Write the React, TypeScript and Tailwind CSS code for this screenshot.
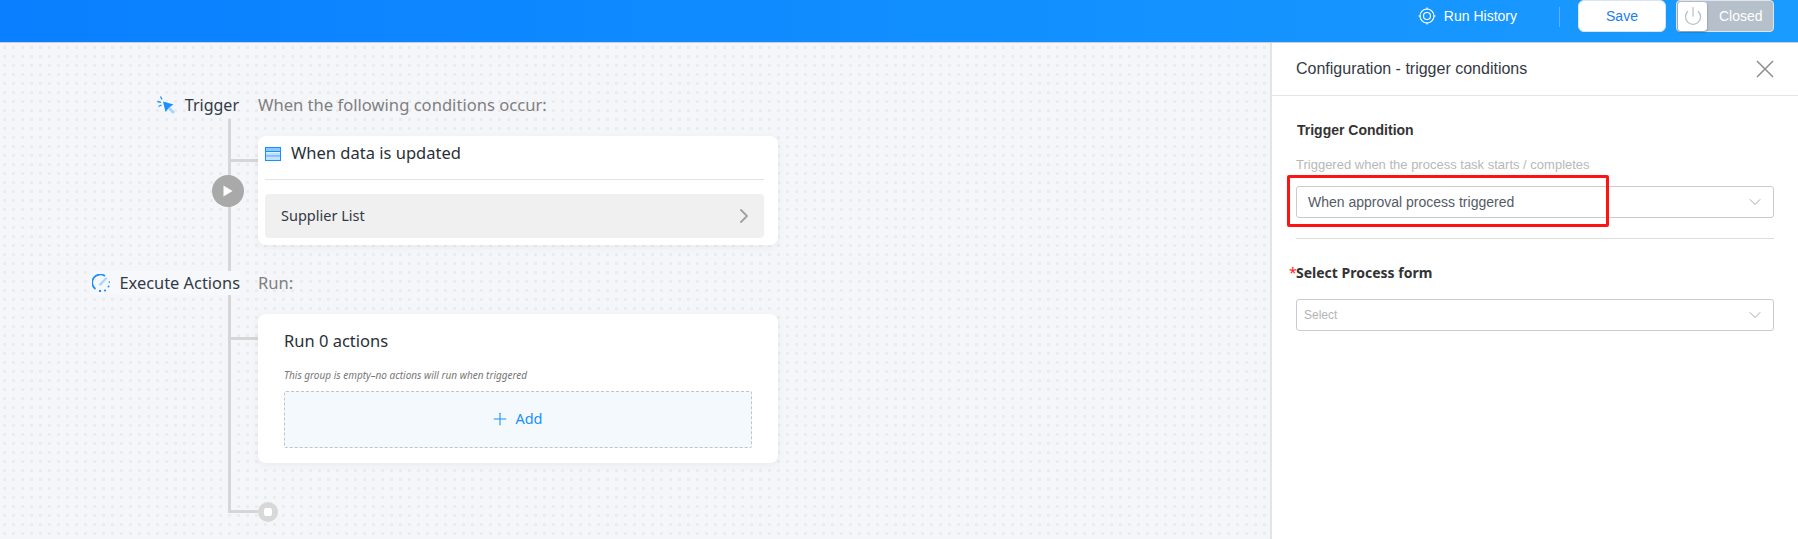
import { ChevronRight, ChevronDown, Plus, Power } from 'lucide-react';

function TriggerIcon() {
  return (
    <svg width="18" height="18" viewBox="0 0 18 18" className="shrink-0">
      <path d="M11 11l6 6" stroke="#a9d5ff" strokeWidth="3" />
      <path d="M6 5.500L16.500 8.500 12 11.500 8.500 16z" fill="#1890ff" />
      <path d="M3.500 0.500L5 3.500M0.500 5.500L4 6.300M1.500 10.500L4.500 9" stroke="#1890ff" strokeWidth="1.300" />
    </svg>
  );
}

function ExecuteIcon() {
  return (
    <svg width="18" height="18" viewBox="0 0 18 18" className="shrink-0">
      <path d="M3.500 15A8 8 0 0 1 13 2" fill="none" stroke="#1890ff" strokeWidth="1.700" />
      <path d="M6.500 10.500L14 3l1.500 1.500L8.500 12z" fill="#a9d5ff" />
      <circle cx="8" cy="17" r="1.200" fill="#1890ff" />
      <circle cx="13" cy="16.500" r="1.100" fill="#1890ff" />
      <circle cx="16.500" cy="12.500" r="1" fill="#1890ff" />
      <circle cx="17.300" cy="8" r="0.800" fill="#1890ff" />
    </svg>
  );
}

function TableIcon() {
  return (
    <svg width="16" height="14" viewBox="0 0 16 14" className="shrink-0">
      <rect x="0.500" y="0.500" width="15" height="13" fill="#fff" stroke="#1890ff" />
      <rect x="1" y="1" width="14" height="3" fill="#8cc8ff" />
      <rect x="1" y="5.500" width="14" height="3" fill="#bfe0ff" />
      <rect x="1" y="10" width="14" height="3" fill="#bfe0ff" />
      <path d="M1 4.500h14M1 9h14" stroke="#1890ff" />
    </svg>
  );
}

function RunHistoryIcon() {
  return (
    <svg width="18" height="18" viewBox="0 0 18 18" className="shrink-0" fill="none" stroke="#fff">
      <circle cx="9" cy="9" r="7" strokeWidth="1.200" />
      <circle cx="9" cy="9" r="3.500" strokeWidth="1.200" />
      <path d="M9 0.500v2M9 15.500v2M0.500 9h2M15.500 9h2" strokeWidth="1.200" />
    </svg>
  );
}

function SelectBox({ text, placeholder }: { text: string; placeholder?: boolean }) {
  return (
    <div className="flex items-center justify-between h-[32px] border border-[#cccccc] rounded-[3px] bg-white pl-[11px] pr-[8px]">
      <span className={placeholder ? 'text-[12px] text-[#b4b4b4] -ml-[4px]' : 'text-[14px] text-[#555b66]'}>{text}</span>
      <ChevronDown size={20} strokeWidth={1} className="text-[#999999]" />
    </div>
  );
}

export default function App() {
  return (
    <div className="w-[1798px] h-[539px] flex flex-col overflow-hidden font-['Liberation_Sans',sans-serif]">
      {/* top bar */}
      <header className="h-[43px] shrink-0 flex items-start justify-end bg-gradient-to-r from-[#0a7fff] to-[#1a9bff] border-b border-[#c9ced6] pr-[24px]">
        <div className="flex items-center gap-[8px] h-[32px] text-[14px] text-white">
          <RunHistoryIcon />
          <span>Run History</span>
        </div>
        <div className="w-px h-[20px] mt-[7px] ml-[42px] bg-[#58b4ff]" />
        <button className="w-[88px] h-[32px] ml-[18px] bg-white rounded-[6px] border border-[#d9e6f2] text-[14px] text-[#1a7cf5]">Save</button>
        <div className="w-[98px] h-[32px] ml-[10px] flex items-center bg-[#b6c0ca] border border-[#dfe5ea] rounded-[4px] pl-[1px]">
          <div className="w-[29px] h-[29px] bg-white rounded-[3px] shadow-[0_1px_2px_rgba(0,0,0,0.4)] flex items-center justify-center">
            <Power size={20} strokeWidth={1.500} className="text-[#b6c0ca]" />
          </div>
          <span className="ml-[12px] text-[14px] text-white">Closed</span>
        </div>
      </header>

      <div className="flex-1 flex min-h-0">
        {/* flow canvas */}
        <main className="relative w-[1270px] shrink-0 bg-[#f5f6fa] bg-[radial-gradient(circle,#eaecf0_1.6px,transparent_1.8px)] bg-[length:9px_9px] font-['Noto_Sans',sans-serif]">
          {/* connectors */}
          <div className="absolute left-[228px] top-[76px] w-[3px] h-[393px] bg-[#d6d6d6]" />
          <div className="absolute left-[231px] top-[116px] w-[27px] h-[3px] bg-[#d6d6d6]" />
          <div className="absolute left-[231px] top-[294px] w-[27px] h-[3px] bg-[#d6d6d6]" />
          <div className="absolute left-[228px] top-[467px] w-[30px] h-[3px] bg-[#d6d6d6]" />
          <div className="absolute left-[212px] top-[132px] w-[32px] h-[32px] rounded-full bg-[#a9a9a9] flex items-center justify-center">
            <svg width="10" height="12" viewBox="0 0 10 12"><path d="M0.500 0.500L9.500 6 0.500 11.500z" fill="#fff" /></svg>
          </div>
          <div className="absolute left-[258px] top-[459px] w-[20px] h-[20px] rounded-full bg-[#d8d8d8] flex items-center justify-center">
            <div className="w-[8px] h-[8px] rounded-[2px] bg-white" />
          </div>

          <div className="relative flex flex-col pl-[258px] pt-[49px] w-[778px] box-content">
            <div className="relative h-[26px] flex items-center">
              <div className="absolute right-full mr-[19px] flex items-center gap-[10px] text-[16px] text-[#333a45] whitespace-nowrap">
                <TriggerIcon />
                <span>Trigger</span>
              </div>
              <span className="text-[16.6px] text-[#7f7f7f]">When the following conditions occur:</span>
            </div>

            <section className="w-[520px] h-[109px] mt-[18px] bg-white rounded-[8px] shadow-[0_2px_8px_rgba(0,0,0,0.05)] pl-[7px] pr-[14px]">
              <div className="h-[44px] pb-[8px] flex items-center gap-[10px] border-b border-[#e4e4e4] text-[16.5px] text-[#2b2f36]">
                <TableIcon />
                <span>When data is updated</span>
              </div>
              <div className="h-[44px] mt-[14px] flex items-center justify-between bg-[#f0f0f0] rounded-[4px] pl-[16px] pr-[8px] text-[14.5px] text-[#333a45]">
                <span>Supplier List</span>
                <ChevronRight size={24} strokeWidth={1.800} className="text-[#a0a0a0]" />
              </div>
            </section>

            <div className="relative h-[26px] mt-[25px] flex items-center">
              <div className="absolute right-full mr-[18px] h-[24px] pl-[2px] flex items-center gap-[9px] bg-[#f7f8fb] text-[16.4px] text-[#333a45] whitespace-nowrap">
                <ExecuteIcon />
                <span>Execute Actions</span>
              </div>
              <span className="text-[16.6px] text-[#7f7f7f]">Run:</span>
            </div>

            <section className="w-[520px] h-[149px] mt-[18px] bg-white rounded-[8px] shadow-[0_2px_8px_rgba(0,0,0,0.05)] px-[26px]">
              <div className="pt-[15px] text-[16.5px] leading-[24px] text-[#2b2f36]">Run 0 actions</div>
              <div className="mt-[15px] text-[10px] leading-[14px] italic text-[#777777]">This group is empty–no actions will run when triggered</div>
              <div className="h-[57px] mt-[9px] pb-[1px] pr-[3px] flex items-center justify-center gap-[5px] bg-[#f4f9fe] border border-dashed border-[#c4c4c4] rounded-[2px] text-[14.5px] text-[#1890ff]">
                <Plus size={20} strokeWidth={1.300} />
                <span>Add</span>
              </div>
            </section>
          </div>
        </main>

        {/* configuration panel */}
        <aside className="flex-1 min-w-0 bg-white border-l-2 border-[#e4e4e4]">
          <div className="h-[53px] flex items-center justify-between pl-[24px] pr-[24px] border-b border-[#e6e6e6]">
            <span className="text-[16px] text-[#333a45]">Configuration - trigger conditions</span>
            <svg width="18" height="18" viewBox="0 0 18 18" fill="none" stroke="#8c8c8c" strokeWidth="1.500"><path d="M1 1l16 16M17 1L1 17" /></svg>
          </div>
          <div className="pl-[24px] pr-[24px]">
            <div className="pt-[25px] pl-[1px] text-[14px] leading-[18px] font-bold text-[#333333]">Trigger Condition</div>
            <div className="mt-[18px] text-[13px] leading-[16px] text-[#b8b8b8]">Triggered when the process task starts / completes</div>
            <div className="relative mt-[13px]">
              <SelectBox text="When approval process triggered" />
              <div className="absolute -left-[9px] -top-[11px] w-[322px] h-[52px] border-[3px] border-[#ff1212] rounded-[2px]" />
            </div>
            <div className="mt-[20px] border-t border-[#dddddd]" />
            <div className="relative mt-[25px] text-[14px] leading-[18px] font-bold font-['Noto_Sans',sans-serif] text-[#333333]">
              <span className="absolute -left-[7px] text-[#ff2020] font-normal">*</span>
              Select Process form
            </div>
            <div className="mt-[17px]">
              <SelectBox text="Select" placeholder />
            </div>
          </div>
        </aside>
      </div>
    </div>
  );
}
